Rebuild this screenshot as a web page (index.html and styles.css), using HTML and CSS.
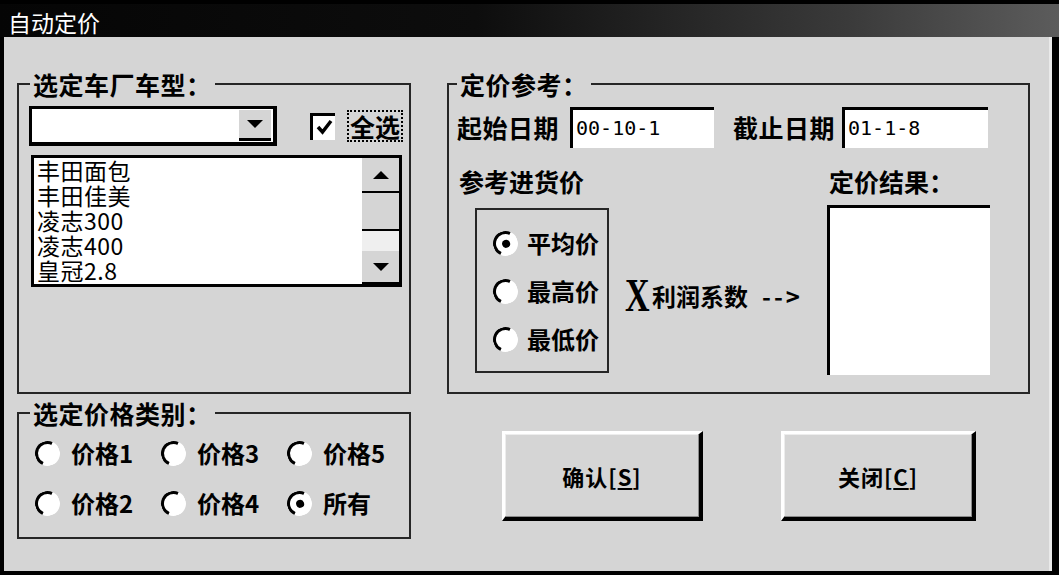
FILE: index.html
```html
<!DOCTYPE html>
<html lang="zh-CN">
<head>
<meta charset="utf-8">
<title>自动定价</title>
<link rel="stylesheet" href="styles.css">
</head>
<body>
<div class="window">
  <div class="titlebar">自动定价</div>
  <div class="client">
    <div class="left">
      <fieldset class="group g1">
        <legend>选定车厂车型：</legend>
        <div class="row1">
          <div class="combo">
            <div class="combo-btn"><span class="tri-down"></span></div>
          </div>
          <div class="cbox">
            <svg width="19" height="19" viewBox="0 0 19 19"><path d="M3 9 L7.5 14 L16 3" fill="none" stroke="#000" stroke-width="3.5"/></svg>
          </div>
          <span class="clabel">全选</span>
        </div>
        <div class="listbox">
          <ul class="items">
            <li>丰田面包</li>
            <li>丰田佳美</li>
            <li>凌志300</li>
            <li>凌志400</li>
            <li>皇冠2.8</li>
          </ul>
          <div class="scroll">
            <div class="sb-up"><span class="tri-up"></span></div>
            <div class="sb-thumb"></div>
            <div class="sb-track"></div>
            <div class="sb-down"><span class="tri-down"></span></div>
          </div>
        </div>
      </fieldset>
      <fieldset class="group g2">
        <legend>选定价格类别：</legend>
        <div class="radio-grid">
          <div class="radio"><span class="rb"></span>价格1</div>
          <div class="radio"><span class="rb"></span>价格3</div>
          <div class="radio"><span class="rb"></span>价格5</div>
          <div class="radio"><span class="rb"></span>价格2</div>
          <div class="radio"><span class="rb"></span>价格4</div>
          <div class="radio"><span class="rb on"></span>所有</div>
        </div>
      </fieldset>
    </div>
    <div class="right">
      <fieldset class="group g3">
        <legend>定价参考：</legend>
        <div class="dates">
          <span class="dlabel">起始日期</span>
          <div class="dinput d1">00-10-1</div>
          <span class="dlabel l2">截止日期</span>
          <div class="dinput d2">01-1-8</div>
        </div>
        <div class="heads">
          <span class="h1">参考进货价</span>
          <span>定价结果：</span>
        </div>
        <div class="calc">
          <div class="refbox">
            <div class="radio"><span class="rb on"></span>平均价</div>
            <div class="radio"><span class="rb"></span>最高价</div>
            <div class="radio"><span class="rb"></span>最低价</div>
          </div>
          <div class="formula"><span class="x">X</span>利润系数<span class="arrow">--&gt;</span></div>
          <div class="result"></div>
        </div>
      </fieldset>
      <div class="buttons">
        <div class="btn b1">确认[<u>S</u>]</div>
        <div class="btn b2">关闭[<u>C</u>]</div>
      </div>
    </div>
  </div>
</div>
</body>
</html>
```

FILE: styles.css
```css
html, body {
  margin: 0;
  padding: 0;
  background: #000;
}
body {
  font-family: "Noto Sans CJK SC", sans-serif;
  color: #000;
}
.window {
  width: 1059px;
  height: 575px;
  background: #000;
  display: flex;
  flex-direction: column;
  overflow: hidden;
}
.titlebar {
  height: 33px;
  margin-top: 4px;
  padding-left: 8px;
  background: linear-gradient(to right, #050505 0%, #0d0d0d 45%, #3a3a3a 80%, #5c5c5c 100%);
  color: #fff;
  font: 23px/37px "Noto Sans CJK SC", sans-serif;
}
.client {
  flex: 1;
  margin: 0 7px 4px 4px;
  padding: 34px 0 0 13px;
  background: #d5d5d5;
  display: flex;
  gap: 36px;
  box-shadow: inset -3px 0 0 #e9e9e9;
}
.left {
  width: 394px;
  display: flex;
  flex-direction: column;
}
.right {
  width: 583px;
  display: flex;
  flex-direction: column;
}
.group {
  margin: 0;
  padding: 0;
  min-width: 0;
  box-sizing: border-box;
  border: 2px solid #262626;
}
.group legend {
  font: bold 25px/26px "Noto Sans CJK SC", sans-serif;
  padding: 0 3px;
  margin-left: 11px;
  letter-spacing: 0.5px;
}
.g1 {
  height: 323px;
}
.row1 {
  display: flex;
  align-items: center;
  margin: 9px 0 0 10px;
  height: 40px;
}
.combo {
  width: 248px;
  height: 40px;
  box-sizing: border-box;
  border-style: solid;
  border-color: #000;
  border-width: 3px 4px 4px 3px;
  background: #fff;
  display: flex;
  justify-content: flex-end;
  align-items: flex-start;
}
.combo-btn {
  width: 32px;
  height: 28px;
  margin: 1px 2px 0 0;
  background: #d5d5d5;
  border-bottom: 3px solid #000;
  display: flex;
  align-items: center;
  justify-content: center;
}
.tri-down {
  width: 0;
  height: 0;
  border-left: 8px solid transparent;
  border-right: 8px solid transparent;
  border-top: 8px solid #000;
}
.tri-up {
  width: 0;
  height: 0;
  border-left: 8px solid transparent;
  border-right: 8px solid transparent;
  border-bottom: 8px solid #000;
}
.cbox {
  width: 25px;
  height: 27px;
  margin-left: 33px;
  box-sizing: border-box;
  background: #fff;
  border-left: 3px solid #000;
  border-top: 3px solid #000;
  display: flex;
  align-items: center;
  justify-content: center;
}
.clabel {
  margin-left: 12px;
  border: 2px dotted #000;
  padding: 0 1px;
  font: bold 25px/28px "Noto Sans CJK SC", sans-serif;
}
.listbox {
  display: flex;
  width: 371px;
  height: 132px;
  box-sizing: border-box;
  margin: 9px 0 0 12px;
  border: 3px solid #000;
  background: #fff;
}
.items {
  flex: 1;
  list-style: none;
  margin: 0;
  padding: 0 0 0 3px;
  font: 23px/25px "Noto Sans CJK SC", sans-serif;
  letter-spacing: 0.5px;
  overflow: hidden;
}
.scroll {
  width: 37px;
  display: flex;
  flex-direction: column;
  background: #d5d5d5;
}
.sb-up {
  height: 33px;
  border-bottom: 2px solid #000;
  display: flex;
  align-items: center;
  justify-content: center;
}
.sb-thumb {
  height: 36px;
  border-bottom: 2px solid #000;
}
.sb-track {
  height: 20px;
  background: #efefef;
}
.sb-down {
  height: 31px;
  border-bottom: 2px solid #000;
  display: flex;
  align-items: center;
  justify-content: center;
}
.g2 {
  height: 139px;
  margin-top: 6px;
}
.radio-grid {
  display: grid;
  grid-template-columns: 126px 126px 126px;
  grid-auto-rows: 34px;
  row-gap: 16px;
  margin: 10px 0 0 16px;
}
.radio {
  display: flex;
  align-items: center;
  gap: 11px;
  font: bold 24px/34px "Noto Sans CJK SC", sans-serif;
}
.rb {
  width: 25px;
  height: 25px;
  flex: none;
  box-sizing: border-box;
  border-radius: 50%;
  background: #fff;
  border: 3px solid;
  border-color: #000 #fff #fff #000;
  transform: rotate(-20deg);
  display: flex;
  align-items: center;
  justify-content: center;
}
.rb.on::after {
  content: "";
  width: 8px;
  height: 8px;
  border-radius: 50%;
  background: #000;
}
.g3 {
  height: 323px;
}
.g3 legend {
  margin-left: 8px;
}
.dates {
  display: flex;
  align-items: center;
  height: 41px;
  margin-top: 10px;
  padding-left: 8px;
}
.dlabel {
  font: bold 25px/41px "Noto Sans CJK SC", sans-serif;
  letter-spacing: 0.5px;
}
.dlabel.l2 {
  margin-left: 19px;
}
.dinput {
  height: 41px;
  box-sizing: border-box;
  background: #fff;
  border-left: 3px solid #000;
  border-top: 3px solid #000;
  padding-left: 3px;
  font: 20px/36px "DejaVu Sans Mono", monospace;
}
.d1 {
  width: 144px;
  margin-left: 11px;
}
.d2 {
  width: 146px;
  margin-left: 7px;
}
.heads {
  display: flex;
  margin-top: 18px;
  padding-left: 10px;
  font: bold 25px/30px "Noto Sans CJK SC", sans-serif;
}
.heads .h1 {
  width: 370px;
}
.calc {
  display: flex;
  align-items: flex-start;
  margin-top: 12px;
  padding-left: 26px;
}
.refbox {
  width: 134px;
  height: 165px;
  box-sizing: border-box;
  border: 2px solid #262626;
  padding: 16px 0 0 16px;
  display: flex;
  flex-direction: column;
  gap: 14px;
}
.refbox .radio {
  gap: 9px;
  height: 34px;
}
.formula {
  width: 218px;
  box-sizing: border-box;
  margin-top: 66px;
  padding-left: 16px;
  font: bold 24px/44px "Noto Sans CJK SC", sans-serif;
  white-space: nowrap;
}
.formula .x {
  display: inline-block;
  width: 27px;
  font: bold 46px/44px "Liberation Serif", serif;
  transform: scaleX(0.74);
  transform-origin: left center;
  vertical-align: top;
}
.formula .arrow {
  margin-left: 14px;
  letter-spacing: 3px;
}
.result {
  width: 163px;
  height: 170px;
  margin-top: -3px;
  box-sizing: border-box;
  background: #fff;
  border-left: 3px solid #000;
  border-top: 3px solid #000;
}
.buttons {
  display: flex;
  gap: 78px;
  margin-top: 37px;
  padding-left: 55px;
}
.btn {
  height: 90px;
  box-sizing: border-box;
  background: #d5d5d5;
  border-style: solid;
  border-width: 3px 4px 4px 3px;
  border-color: #fff #000 #000 #fff;
  box-shadow: inset -1px -1px 0 #8a8a8a, inset 1px 1px 0 #ededed;
  display: flex;
  align-items: center;
  justify-content: center;
  font: bold 22px/1 "Noto Sans CJK SC", sans-serif;
  letter-spacing: 1px;
}
.b1 {
  width: 201px;
}
.b2 {
  width: 195px;
}
```
